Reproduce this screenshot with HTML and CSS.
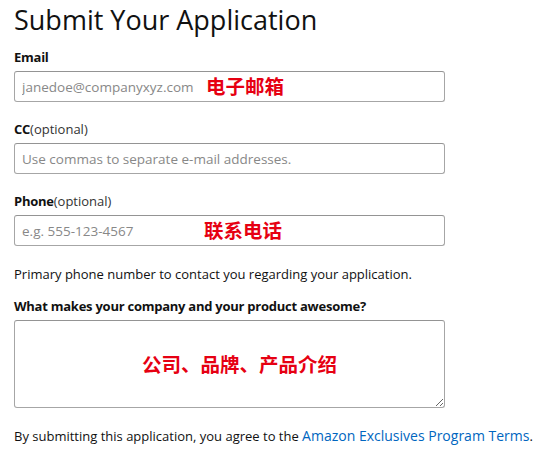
FILE: index.html
```
<!DOCTYPE html>
<html lang="en">
<head>
    <meta charset="UTF-8">
    <meta name="viewport" content="width=device-width, initial-scale=1.0">
    <title>Submit Your Application</title>
    <link rel="stylesheet" href="styles.css">
</head>
<body>
    <div class="page">
        <h1 class="page-title">Submit Your Application</h1>
        <form class="apply-form">
            <div class="field">
                <label class="field-label" for="email">Email</label>
                <div class="input-wrap">
                    <input class="text-input" type="email" id="email" placeholder="janedoe@companyxyz.com">
                    <span class="note note-email">电子邮箱</span>
                </div>
            </div>
            <div class="field">
                <label class="field-label" for="cc">CC<span class="optional">(optional)</span></label>
                <div class="input-wrap">
                    <input class="text-input" type="text" id="cc" placeholder="Use commas to separate e-mail addresses.">
                </div>
            </div>
            <div class="field field-tight">
                <label class="field-label" for="phone">Phone<span class="optional">(optional)</span></label>
                <div class="input-wrap">
                    <input class="text-input" type="tel" id="phone" placeholder="e.g. 555-123-4567">
                    <span class="note note-phone">联系电话</span>
                </div>
                <p class="hint">Primary phone number to contact you regarding your application.</p>
            </div>
            <div class="field">
                <label class="field-label" for="about">What makes your company and your product awesome?</label>
                <div class="input-wrap">
                    <textarea class="text-area" id="about"></textarea>
                    <span class="note note-about">公司、品牌、产品介绍</span>
                </div>
            </div>
            <p class="terms">By submitting this application, you agree to the <a href="#">Amazon Exclusives Program Terms</a>.</p>
        </form>
    </div>
</body>
</html>
```

FILE: styles.css
```
body {
    font-family: "Open Sans", "Noto Sans", Arial, sans-serif;
    font-size: 13px;
    color: #111;
    margin: 0;
    padding: 0;
    background-color: #fff;
}

.page {
    padding: 0 14px;
}

.page-title {
    font-size: 27px;
    font-weight: 400;
    line-height: 40px;
    margin: 0 0 8px;
}

.field {
    width: 431px;
    margin-bottom: 18px;
}

.field-tight {
    margin-bottom: 13px;
}

.field-label {
    display: block;
    font-weight: 700;
    letter-spacing: -0.25px;
    line-height: 19px;
    margin-bottom: 4px;
}

.optional {
    font-weight: 400;
    letter-spacing: 0;
    color: #333;
}

.input-wrap {
    position: relative;
}

.text-input,
.text-area {
    display: block;
    width: 100%;
    box-sizing: border-box;
    border: 1px solid #a6a6a6;
    border-top-color: #949494;
    border-radius: 3px;
    padding: 0 7px;
    font-family: inherit;
    font-size: 13.5px;
    color: #111;
}

.text-input {
    height: 31px;
}

.text-area {
    height: 88px;
}

.text-input::placeholder {
    color: #888;
}

.note {
    position: absolute;
    color: #e60012;
    font-family: "Noto Sans CJK SC", sans-serif;
    font-weight: 700;
    font-size: 19.5px;
    line-height: 24px;
    pointer-events: none;
}

.note-email {
    left: 192px;
    top: 3px;
}

.note-phone {
    left: 190px;
    top: 3px;
}

.note-about {
    left: 128px;
    top: 32px;
}

.hint {
    margin: 19px 0 0;
    line-height: 19px;
}

.terms {
    margin: 3px 0 0;
    line-height: 19px;
    white-space: nowrap;
}

.terms a {
    color: #0066c0;
    font-size: 14px;
    text-decoration: none;
}
```
